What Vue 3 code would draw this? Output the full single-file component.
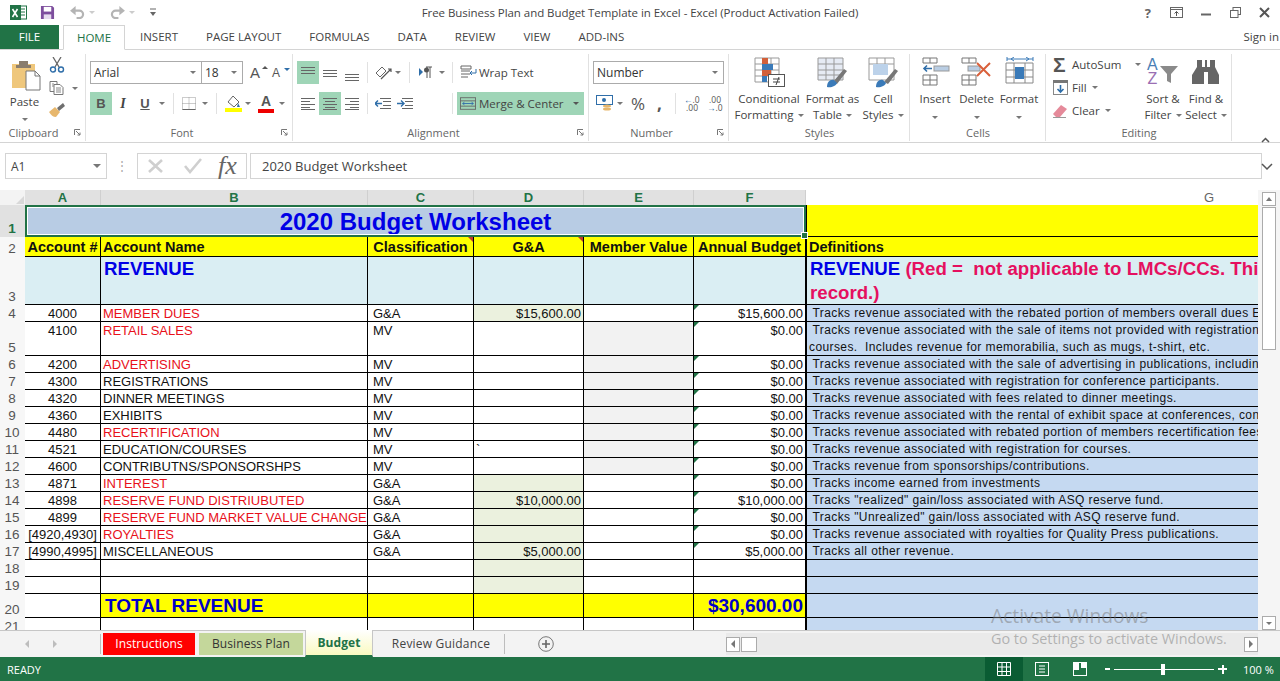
<template>
  <div class="app">
    <div class="titlebar">
      <div class="qat">
        <svg width="17" height="17" viewBox="0 0 17 17"><rect x="8" y="2" width="8.500" height="13" fill="#fff" stroke="#217346"/><path d="M11 5h4M11 8h4M11 11h4" stroke="#217346"/><rect x="0" y="1" width="11" height="15" fill="#217346"/><path d="M2.500 5l5 8M7.500 5l-5 8" stroke="#fff" stroke-width="1.600"/></svg>
        <svg class="save" width="15" height="15" viewBox="0 0 16 16"><path d="M1 1h12l2 2v12H1z" fill="#7d4e9d"/><rect x="4" y="2" width="8" height="5" fill="#fff"/><rect x="4" y="10" width="8" height="5" fill="#e6dcee"/></svg>
        <svg class="undo" width="15" height="13" viewBox="0 0 16 14"><path d="M4 5h6a4 4 0 0 1 0 8H7" fill="none" stroke="#b4b4b4" stroke-width="2.400"/><path d="M6 0v10L0 5z" fill="#b4b4b4"/></svg>
        <i class="dd light"></i>
        <svg class="redo" width="15" height="13" viewBox="0 0 16 14"><path d="M12 5H6a4 4 0 0 0 0 8h3" fill="none" stroke="#b4b4b4" stroke-width="2.400"/><path d="M10 0v10l6-5z" fill="#b4b4b4"/></svg>
        <i class="dd light"></i>
        <svg class="custom" width="8" height="9" viewBox="0 0 8 9"><path d="M1 1h6" stroke="#666"/><path d="M1 4h6L4 8z" fill="#666"/></svg>
      </div>
      <div class="doc-title">Free Business Plan and Budget Template in Excel - Excel (Product Activation Failed)</div>
      <div class="win">
        <span class="help">?</span>
        <svg width="13" height="11" viewBox="0 0 13 11"><rect x=".5" y=".5" width="12" height="10" fill="none" stroke="#666"/><path d="M.5 2.500h12" stroke="#666"/><path d="M6.500 9V4.500M4.500 6.500l2-2 2 2" fill="none" stroke="#555"/></svg>
        <svg width="10" height="10" viewBox="0 0 10 10"><path d="M0 6.500h10" stroke="#666" stroke-width="2"/></svg>
        <svg width="11" height="11" viewBox="0 0 11 11"><rect x="3" y=".5" width="7.500" height="7" fill="none" stroke="#666"/><rect x=".5" y="3.500" width="7.500" height="7" fill="#fff" stroke="#666"/></svg>
        <svg width="11" height="11" viewBox="0 0 11 11"><path d="M1 1l9 9M10 1l-9 9" stroke="#555" stroke-width="2"/></svg>
      </div>
    </div>

    <div class="tabs">
      <div class="file">FILE</div>
      <div class="tab home">HOME</div>
      <div class="tab-list">
        <span v-for="t in tabs" :key="t">{{ t }}</span>
      </div>
      <div class="signin">Sign in</div>
    </div>

    <div class="ribbon">
      <div class="group g-clip">
        <div class="body clip">
          <div class="paste">
            <svg width="31" height="32" viewBox="0 0 31 32"><rect x="1" y="5" width="23" height="24" fill="#efc77c"/><rect x="8" y="2" width="9" height="6" fill="#8a7d6d"/><rect x="5" y="6" width="15" height="3" fill="#8a7d6d"/><path d="M15 12h9l5 5v14H15z" fill="#fff" stroke="#777"/><path d="M24 12v5h5" fill="none" stroke="#777"/></svg>
            <span>Paste</span>
            <i class="dd"></i>
          </div>
          <div class="clip-small">
            <svg width="16" height="16" viewBox="0 0 16 16"><path d="M4 0l6 10M12 0L6 10" stroke="#666" stroke-width="1.300"/><circle cx="4" cy="12.500" r="2.500" fill="none" stroke="#2f6ea9" stroke-width="1.400"/><circle cx="12" cy="12.500" r="2.500" fill="none" stroke="#2f6ea9" stroke-width="1.400"/></svg>
            <div class="copy"><svg width="16" height="14" viewBox="0 0 16 14"><path d="M1 .5h7v10H1z" fill="#fff" stroke="#777"/><path d="M5 3.500h6l3 3v7H5z" fill="#fff" stroke="#777"/><path d="M7 7h5M7 9h5M7 11h5M3 3h2M3 5h2" stroke="#888"/></svg><i class="dd"></i></div>
            <svg width="16" height="14" viewBox="0 0 16 14"><path d="M0 9l6-5 5 5-4 5c-3 0-5-2-7-5z" fill="#e7b76d"/><path d="M8 5l6-5 2 3-6 5z" fill="#6f6f6f"/></svg>
          </div>
        </div>
        <div class="label launcher">Clipboard<svg class="launch" width="7" height="7" viewBox="0 0 7 7"><path d="M.5 6V.5H6M2 2l4 4M6 3.500V6H3.500" fill="none" stroke="#777"/></svg></div>
      </div>

      <div class="group g-font">
        <div class="body">
          <div class="row">
            <div class="combo font-name">Arial<i class="dd"></i></div>
            <div class="combo font-size">18<i class="dd"></i></div>
            <span class="grow-a">A<i class="up"></i></span>
            <span class="grow-a small">A<i class="down"></i></span>
          </div>
          <div class="row">
            <div class="ib on bold">B</div>
            <div class="ib ital">I</div>
            <div class="ib under">U</div>
            <i class="dd u-dd"></i>
            <b class="sep s1"></b>
            <svg class="bd" width="14" height="13" viewBox="0 0 14 13"><path d="M.5.5h13v12H.5zM7 .5v12M.5 6.500h13" fill="none" stroke="#999" stroke-dasharray="1 1"/><path d="M.5 12.500h13" stroke="#666"/></svg>
            <i class="dd bd-dd"></i>
            <b class="sep s2"></b>
            <svg class="fill" width="17" height="19" viewBox="0 0 17 19"><path d="M3 8l5-6 6 6-5 5z" fill="#fff" stroke="#666"/><path d="M13 9l2 4h-3z" fill="#2f6ea9"/><rect x="0" y="14" width="17" height="4" fill="#ff0"/></svg>
            <i class="dd fill-dd"></i>
            <span class="color-a">A</span>
            <i class="dd col-dd"></i>
          </div>
        </div>
        <div class="label launcher">Font<svg class="launch" width="7" height="7" viewBox="0 0 7 7"><path d="M.5 6V.5H6M2 2l4 4M6 3.500V6H3.500" fill="none" stroke="#777"/></svg></div>
      </div>

      <div class="group g-align">
        <div class="body">
          <div class="row">
            <div class="ib on"><svg width="14" height="16" viewBox="0 0 14 16"><path d="M0 2.500h14M0 5.500h14M0 8.500h14" stroke="#666"/></svg></div>
            <div class="ib"><svg width="14" height="16" viewBox="0 0 14 16"><path d="M0 5.500h14M0 8.500h14M0 11.500h14" stroke="#666"/></svg></div>
            <div class="ib"><svg width="14" height="16" viewBox="0 0 14 16"><path d="M0 9.500h14M0 12.500h14M0 15.500h14" stroke="#666"/></svg></div>
            <b class="sep s3"></b>
            <svg class="orient" width="18" height="16" viewBox="0 0 18 16"><path d="M1 8l6-6 4 4-6 6z" fill="none" stroke="#666"/><path d="M6 14L16 4M13 4h3v3" fill="none" stroke="#555" stroke-width="1.200"/></svg>
            <i class="dd or-dd"></i>
            <b class="sep s4"></b>
            <svg class="para" width="14" height="13" viewBox="0 0 14 13"><path d="M0 2v8l4-4z" fill="#2f6ea9"/><path d="M7 1h6M8 1v11M11 1v11" stroke="#555"/><circle cx="7.500" cy="4" r="2.500" fill="#555"/></svg>
            <i class="dd"></i>
            <b class="sep s5"></b>
            <svg class="wrap-ic" width="17" height="15" viewBox="0 0 17 15"><path d="M1 1h10v3H1zM1 6h9M1 9h9M1 12h7" fill="none" stroke="#666"/><path d="M16 4v4h-6M12 6l-2 2 2 2" fill="none" stroke="#2f6ea9"/></svg>
            <span class="wrap-txt">Wrap Text</span>
          </div>
          <div class="row">
            <div class="ib"><svg width="14" height="12" viewBox="0 0 14 12"><path d="M0 .5h14M0 3.500h9M0 6.500h14M0 9.500h9M0 11.500h14" stroke="#666"/></svg></div>
            <div class="ib on"><svg width="14" height="12" viewBox="0 0 14 12"><path d="M0 .5h14M2 3.500h10M0 6.500h14M2 9.500h10M0 11.500h14" stroke="#666"/></svg></div>
            <div class="ib"><svg width="14" height="12" viewBox="0 0 14 12"><path d="M0 .5h14M5 3.500h9M0 6.500h14M5 9.500h9M0 11.500h14" stroke="#666"/></svg></div>
            <b class="sep s3"></b>
            <svg class="outdent" width="16" height="12" viewBox="0 0 16 12"><path d="M5 .5h11M8 3.500h8M8 7.500h8M5 10.500h11" stroke="#666"/><path d="M0 5.500h7M3 2.500l-3 3 3 3" fill="none" stroke="#2f6ea9" stroke-width="1.400"/></svg>
            <svg class="indent" width="16" height="12" viewBox="0 0 16 12"><path d="M5 .5h11M8 3.500h8M8 7.500h8M5 10.500h11" stroke="#666"/><path d="M0 5.500h7M4 2.500l3 3-3 3" fill="none" stroke="#2f6ea9" stroke-width="1.400"/></svg>
            <b class="sep s6"></b>
            <div class="merge">
              <svg width="16" height="15" viewBox="0 0 18 16"><rect x=".5" y="1.500" width="17" height="13" fill="none" stroke="#666"/><path d="M.5 5h17M.5 11h17" stroke="#666"/><path d="M3 8h12M5 6.500L3 8l2 1.500M13 6.500L15 8l-2 1.500" fill="none" stroke="#2f6ea9"/></svg>
              <span>Merge &amp; Center</span>
              <i class="dd dark"></i>
            </div>
          </div>
        </div>
        <div class="label launcher">Alignment<svg class="launch" width="7" height="7" viewBox="0 0 7 7"><path d="M.5 6V.5H6M2 2l4 4M6 3.500V6H3.500" fill="none" stroke="#777"/></svg></div>
      </div>

      <div class="group g-num">
        <div class="body">
          <div class="row">
            <div class="combo num-format">Number<i class="dd"></i></div>
          </div>
          <div class="row">
            <svg class="acct" width="17" height="17" viewBox="0 0 17 17"><rect x=".5" y=".5" width="16" height="9" fill="#fff" stroke="#2f6ea9"/><circle cx="8" cy="5" r="2" fill="#2f6ea9"/><ellipse cx="11" cy="11" rx="4" ry="1.500" fill="#e7b76d"/><ellipse cx="11" cy="14" rx="4" ry="1.500" fill="#e7b76d"/></svg>
            <i class="dd"></i>
            <span class="pct">%</span>
            <span class="comma">,</span>
            <b class="sep s7"></b>
            <div class="dec"><span class="arr">←</span>.0<br />.00</div>
            <div class="dec second">.00<br /><span class="arr">→</span>.0</div>
          </div>
        </div>
        <div class="label launcher">Number<svg class="launch" width="7" height="7" viewBox="0 0 7 7"><path d="M.5 6V.5H6M2 2l4 4M6 3.500V6H3.500" fill="none" stroke="#777"/></svg></div>
      </div>

      <div class="group g-styles">
        <div class="body large">
          <div class="big w-cond">
            <svg width="31" height="31" viewBox="0 0 31 31"><path d="M1 1h24v24H1zM9 1v24M17 1v24M1 7h24M1 13h24M1 19h24" fill="none" stroke="#999"/><rect x="8" y="1" width="6" height="6" fill="#d2603a"/><rect x="8" y="7" width="11" height="6" fill="#3a7ab8"/><rect x="8" y="13" width="9" height="6" fill="#d2603a"/><rect x="8" y="19" width="5" height="6" fill="#3a7ab8"/><rect x="14.500" y="17.500" width="16" height="12" fill="#fff" stroke="#555"/><path d="M19 22h7M19 25h7M25 20l-3 8" stroke="#444"/></svg>
            <span>Conditional<br />Formatting<i class="dd"></i></span>
          </div>
          <div class="big w-table">
            <svg width="31" height="31" viewBox="0 0 31 31"><path d="M1 1h25v22H1zM9 1v22M17 1v22M1 7h25M1 13h25M1 18h25" fill="#e6ebf4" stroke="#999"/><path d="M16 25l11-13 3 2-10 13z" fill="#777"/><path d="M10 30c0-5 3-8 7-7l3 3c-1 3-6 5-10 4z" fill="#3a7ab8"/></svg>
            <span>Format as<br />Table<i class="dd"></i></span>
          </div>
          <div class="big w-cell">
            <svg width="31" height="31" viewBox="0 0 31 31"><path d="M1 1h25v22H1zM9 1v6M17 1v6M1 7h25" fill="#fff" stroke="#999"/><rect x="5" y="7" width="15" height="11" fill="#bcd2ea"/><path d="M16 25l11-13 3 2-10 13z" fill="#777"/><path d="M8 30c0-5 3-8 7-7l3 3c-1 3-6 5-10 4z" fill="#3a7ab8"/></svg>
            <span>Cell<br />Styles<i class="dd"></i></span>
          </div>
        </div>
        <div class="label">Styles</div>
      </div>

      <div class="group g-cells">
        <div class="body large">
          <div class="big w-ins">
            <svg width="31" height="31" viewBox="0 0 31 31"><path d="M3 1h14v5H3zM10 1v5M3 18h14v10H3zM10 18v10M3 23h14" fill="none" stroke="#777"/><rect x="14" y="9" width="15" height="5" fill="#b9cde3" stroke="#999"/><path d="M4 11.500h8M7 8.500l-3 3 3 3" fill="none" stroke="#2f6ea9" stroke-width="1.600"/></svg>
            <span>Insert</span><i class="dd"></i>
          </div>
          <div class="big w-del">
            <svg width="33" height="31" viewBox="0 0 33 31"><path d="M2 1h14v5H2zM9 1v5M2 18h14v10H2zM9 18v10M2 23h14" fill="none" stroke="#777"/><rect x="8" y="9" width="12" height="5" fill="#b9cde3" stroke="#999"/><path d="M17 6l13 13M30 6L17 19" stroke="#d9603b" stroke-width="2"/></svg>
            <span>Delete</span><i class="dd"></i>
          </div>
          <div class="big w-fmt">
            <svg width="31" height="31" viewBox="0 0 31 31"><path d="M3 2h26M3 0v4M29 0v4M7 2l3-2M7 2l3 2M25 2l-3-2M25 2l-3 2" fill="none" stroke="#3a7ab8"/><path d="M2 6h27v20H2zM10 6v20M21 6v20M2 13h27M2 20h27" fill="none" stroke="#888"/><rect x="11" y="10" width="9" height="12" fill="#3a7ab8"/></svg>
            <span>Format</span><i class="dd"></i>
          </div>
        </div>
        <div class="label">Cells</div>
      </div>

      <div class="group g-edit">
        <div class="body large">
          <div class="edit-small">
            <div class="e-row"><span class="sigma">Σ</span><span>AutoSum</span><i class="dd autosum-dd"></i></div>
            <div class="e-row"><svg width="15" height="15" viewBox="0 0 15 15"><rect x=".5" y=".5" width="14" height="14" fill="#fff" stroke="#888"/><rect x="0" y="0" width="15" height="3" fill="#777"/><path d="M7.500 5v7M4.500 9l3 3 3-3" fill="none" stroke="#2f6ea9" stroke-width="1.600"/></svg><span>Fill</span><i class="dd"></i></div>
            <div class="e-row"><svg width="15" height="14" viewBox="0 0 15 14"><path d="M0 10l8-9 6 4-7 8H3z" fill="#e58a9a"/><path d="M0 13.500h13" stroke="#999"/></svg><span>Clear</span><i class="dd"></i></div>
          </div>
          <div class="big w-sort">
            <svg width="32" height="31" viewBox="0 0 32 31"><path d="M13 9h18l-7 8v9l-4-2v-7z" fill="#8a8a8a"/></svg>
            <span class="az"><em class="a">A</em><em class="z">Z</em></span>
            <span>Sort &amp;<br />Filter<i class="dd"></i></span>
          </div>
          <div class="big w-find">
            <svg width="28" height="31" viewBox="0 0 28 31"><path d="M5 3h5v7h3V3h2v7h3V3h5v7l4 8v9H16V15h-4v12H0V18l5-8z" fill="#666"/></svg>
            <span>Find &amp;<br />Select<i class="dd"></i></span>
          </div>
        </div>
        <div class="label">Editing</div>
      </div>

      <div class="collapse">
        <svg width="9" height="6" viewBox="0 0 9 6"><path d="M1 5l3.500-3.500L8 5" fill="none" stroke="#555" stroke-width="1.500"/></svg>
      </div>
    </div>

    <div class="formula">
      <div class="namebox">A1<i class="dd"></i></div>
      <div class="dots">⋮</div>
      <div class="fx-box">
        <svg width="18" height="14" viewBox="0 0 18 14"><path d="M2 1l13 12M15 1L2 13" stroke="#cfcfcf" stroke-width="2.600"/></svg>
        <svg width="20" height="16" viewBox="0 0 20 16"><path d="M2 8l5 6L18 1" fill="none" stroke="#cfcfcf" stroke-width="2.600"/></svg>
        <span class="fx">fx</span>
      </div>
      <div class="f-input">2020 Budget Worksheet</div>
      <svg class="f-more" width="14" height="8" viewBox="0 0 14 8"><path d="M2 1l5 5 5-5" fill="none" stroke="#555" stroke-width="1.500"/></svg>
    </div>

    <div class="sheet">
      <div class="grid" :style="{ gridTemplateRows: rowTracks }">
        <div class="corner"><i></i></div>
        <div v-for="c in colHeads" :key="c" class="ch" :class="{ sel: c !== 'G' }">{{ c }}</div>

        <template v-for="r in rows" :key="r.n">
          <div class="rh" :class="{ sel: r.n === 1 }">{{ r.n }}</div>

          <template v-if="r.n === 1">
            <div class="title-cell">2020 Budget Worksheet<i class="handle"></i></div>
            <div class="cell g yellow"></div>
          </template>

          <template v-else-if="r.n === 2">
            <div v-for="(t, i) in heads" :key="i" class="cell head" :class="{ ctr: i !== 1 && i !== 6, note: i === 2 || i === 3, g: i === 6 }">{{ t }}</div>
          </template>

          <template v-else-if="r.n === 3">
            <div class="cell band"></div>
            <div class="cell band rev">REVENUE</div>
            <div class="cell band"></div>
            <div class="cell band"></div>
            <div class="cell band"></div>
            <div class="cell band"></div>
            <div class="cell g band rev-note"><span class="rev-blue">REVENUE</span>{{ revNote }}</div>
          </template>

          <template v-else-if="r.n === 20">
            <div class="cell"></div>
            <div class="cell yellow total">TOTAL REVENUE</div>
            <div class="cell yellow"></div>
            <div class="cell yellow"></div>
            <div class="cell yellow"></div>
            <div class="cell yellow total num">$30,600.00</div>
            <div class="cell g blue"></div>
          </template>

          <template v-else>
            <div class="cell ctr">{{ r.a }}</div>
            <div class="cell" :class="{ red: r.red }">{{ r.b }}</div>
            <div class="cell cls">{{ r.c }}</div>
            <div class="cell" :class="{ num: r.d !== '`', sage: r.sage }">{{ r.d }}</div>
            <div class="cell" :class="{ grey: r.grey }"></div>
            <div class="cell num" :class="{ mark: r.f }">{{ r.f }}</div>
            <div class="cell g blue desc">{{ r.g }}</div>
          </template>
        </template>
      </div>

      <div class="vscroll">
        <div class="sb-btn"><i class="tri-up"></i></div>
        <div class="thumb"></div>
        <div class="sb-btn"><i class="dd"></i></div>
      </div>
      <div class="watermark">
        <div class="wm-big">Activate Windows</div>
        <div class="wm-small">Go to Settings to activate Windows.</div>
      </div>
    </div>

    <div class="tabbar">
      <div class="nav"><i class="tri-left"></i><i class="tri-right"></i></div>
      <b class="tab-sep"></b>
      <div class="stab instr">Instructions</div>
      <div class="stab plan">Business Plan</div>
      <div class="stab budget">Budget</div>
      <div class="stab review">Review Guidance</div>
      <b class="tab-sep"></b>
      <svg class="plus" width="16" height="16" viewBox="0 0 16 16"><circle cx="8" cy="8" r="7.300" fill="none" stroke="#777"/><path d="M8 4v8M4 8h8" stroke="#666" stroke-width="1.600"/></svg>
      <div class="hscroll">
        <div class="sb-btn h"><i class="tri-left"></i></div>
        <div class="hthumb"></div>
        <div class="h-track"></div>
        <div class="sb-btn h"><i class="tri-right"></i></div>
      </div>
    </div>

    <div class="status">
      <span class="ready">READY</span>
      <div class="views">
        <div class="view active"><svg width="14" height="14" viewBox="0 0 14 14"><path d="M.5.5h13v13H.5zM5 .5v13M9.500.5v13M.5 5h13M.5 9.500h13" fill="none" stroke="#fff"/></svg></div>
        <div class="view"><svg width="14" height="14" viewBox="0 0 14 14"><rect x=".5" y=".5" width="13" height="13" fill="none" stroke="#fff"/><path d="M4 4h6M4 7h6M4 10h6" stroke="#fff"/></svg></div>
        <div class="view"><svg width="14" height="14" viewBox="0 0 14 14"><rect x=".5" y=".5" width="13" height="13" fill="none" stroke="#fff"/><path d="M1 1h5v7H1zM8 1h5v5H8z" fill="#fff"/></svg></div>
      </div>
      <div class="zoom">
        <span class="z-m"></span>
        <div class="slider"><span class="knob"></span></div>
        <span class="z-p"></span>
        <span class="pct-txt">100 %</span>
      </div>
    </div>
  </div>
</template>

<script setup>
const tabs = ['INSERT', 'PAGE LAYOUT', 'FORMULAS', 'DATA', 'REVIEW', 'VIEW', 'ADD-INS']
const colHeads = ['A', 'B', 'C', 'D', 'E', 'F', 'G']
const heads = ['Account #', 'Account Name', 'Classification', 'G&A', 'Member Value', 'Annual Budget', 'Definitions']
const revNote = ' (Red =  not applicable to LMCs/CCs. This section is a\nrecord.)'

const rows = [
  { n: 1, h: 32 },
  { n: 2, h: 20 },
  { n: 3, h: 48 },
  { n: 4, h: 17, a: '4000', b: 'MEMBER DUES', red: true, c: 'G&A', d: '$15,600.00', sage: true, f: '$15,600.00', g: ' Tracks revenue associated with the rebated portion of members overall dues Expense' },
  { n: 5, h: 34, a: '4100', b: 'RETAIL SALES', red: true, c: 'MV', grey: true, f: '$0.00', g: ' Tracks revenue associated with the sale of items not provided with registration fees or\ncourses.  Includes revenue for memorabilia, such as mugs, t-shirt, etc.' },
  { n: 6, h: 17, a: '4200', b: 'ADVERTISING', red: true, c: 'MV', grey: true, f: '$0.00', g: ' Tracks revenue associated with the sale of advertising in publications, including newsletters' },
  { n: 7, h: 17, a: '4300', b: 'REGISTRATIONS', c: 'MV', grey: true, f: '$0.00', g: ' Tracks revenue associated with registration for conference participants.' },
  { n: 8, h: 17, a: '4320', b: 'DINNER MEETINGS', c: 'MV', grey: true, f: '$0.00', g: ' Tracks revenue associated with fees related to dinner meetings.' },
  { n: 9, h: 17, a: '4360', b: 'EXHIBITS', c: 'MV', grey: true, f: '$0.00', g: ' Tracks revenue associated with the rental of exhibit space at conferences, conventions' },
  { n: 10, h: 17, a: '4480', b: 'RECERTIFICATION', red: true, c: 'MV', grey: true, f: '$0.00', g: ' Tracks revenue associated with rebated portion of members recertification fees' },
  { n: 11, h: 17, a: '4521', b: 'EDUCATION/COURSES', c: 'MV', d: '`', grey: true, f: '$0.00', g: ' Tracks revenue associated with registration for courses.' },
  { n: 12, h: 17, a: '4600', b: 'CONTRIBUTNS/SPONSORSHPS', c: 'MV', grey: true, f: '$0.00', g: ' Tracks revenue from sponsorships/contributions.' },
  { n: 13, h: 17, a: '4871', b: 'INTEREST', red: true, c: 'G&A', sage: true, f: '$0.00', g: ' Tracks income earned from investments' },
  { n: 14, h: 17, a: '4898', b: 'RESERVE FUND DISTRIUBUTED', red: true, c: 'G&A', d: '$10,000.00', sage: true, f: '$10,000.00', g: ' Tracks "realized" gain/loss associated with ASQ reserve fund.' },
  { n: 15, h: 17, a: '4899', b: 'RESERVE FUND MARKET VALUE CHANGE', red: true, c: 'G&A', sage: true, f: '$0.00', g: ' Tracks "Unrealized" gain/loss associated with ASQ reserve fund.' },
  { n: 16, h: 17, a: '[4920,4930]', b: 'ROYALTIES', red: true, c: 'G&A', sage: true, f: '$0.00', g: ' Tracks revenue associated with royalties for Quality Press publications.' },
  { n: 17, h: 17, a: '[4990,4995]', b: 'MISCELLANEOUS', c: 'G&A', d: '$5,000.00', sage: true, f: '$5,000.00', g: ' Tracks all other revenue.' },
  { n: 18, h: 17, sage: true },
  { n: 19, h: 17, sage: true },
  { n: 20, h: 24 },
  { n: 21, h: 17 }
]

const rowTracks = '15px ' + rows.map((r) => r.h + 'px').join(' ')
</script>

<style>
html, body { margin: 0; background: #fff; overflow: hidden; }
</style>

<style scoped>
.app {
  width: 1280px;
  height: 681px;
  display: flex;
  flex-direction: column;
  overflow: hidden;
  font-family: "Open Sans", "Liberation Sans", sans-serif;
  font-size: 11.5px;
  color: #444;
  background: #fff;
}
i { font-style: normal; }
svg { flex-shrink: 0; }

.dd {
  display: inline-block;
  width: 0;
  height: 0;
  border-left: 3px solid transparent;
  border-right: 3px solid transparent;
  border-top: 3px solid #777;
  vertical-align: middle;
  margin-left: 4px;
}
.dd.light { border-top-color: #ccc; }
.dd.dark { border-top-color: #555; }

/* title bar */
.titlebar {
  height: 25px;
  display: grid;
  grid-template-columns: 1fr auto 1fr;
  align-items: center;
}
.qat { display: flex; align-items: center; padding-left: 10px; }
.save { margin-left: 13px; }
.undo { margin-left: 15px; }
.redo { margin-left: 15px; }
.custom { margin-left: 14px; }
.doc-title { font-size: 11.5px; color: #444; letter-spacing: -.05px; }
.win { display: flex; align-items: center; justify-content: flex-end; gap: 18.500px; padding-right: 10px; }
.help { font-weight: 700; font-size: 13px; color: #666; }

/* tabs */
.tabs {
  height: 25px;
  display: flex;
  align-items: stretch;
  border-bottom: 1px solid #d4d4d4;
  box-sizing: border-box;
  line-height: 24px;
}
.file {
  width: 59px;
  background: #217346;
  color: #fff;
  text-align: center;
}
.tab.home {
  margin-left: 4px;
  width: 62px;
  box-sizing: border-box;
  border: 1px solid #d4d4d4;
  border-bottom: 1px solid #fff;
  height: 25px;
  background: #fff;
  color: #217346;
  text-align: center;
}
.tab-list { display: flex; gap: 28px; margin-left: 15px; }
.signin { margin-left: auto; padding-right: 1px; }

/* ribbon */
.ribbon {
  height: 93px;
  box-sizing: border-box;
  border-bottom: 1px solid #d4d4d4;
  display: flex;
  position: relative;
}
.group {
  box-sizing: border-box;
  height: 87px;
  margin-top: 4px;
  border-right: 1px solid #e1e1e1;
  display: flex;
  flex-direction: column;
  padding-left: 4px;
}
.g-clip { width: 86px; padding-left: 0; }
.g-font { width: 207px; }
.g-align { width: 296px; }
.g-num { width: 140px; }
.g-styles { width: 181px; }
.g-cells { width: 136px; }
.g-edit { width: 186px; }
.body {
  height: 70px;
  box-sizing: border-box;
  padding-top: 7px;
  display: flex;
  flex-direction: column;
  gap: 8px;
}
.body.clip, .body.large { flex-direction: row; gap: 0; padding-top: 3px; }
.label {
  position: relative;
  height: 16px;
  line-height: 16px;
  text-align: center;
  color: #666;
  font-size: 11px;
  margin-top: 2px;
  padding-right: 3px;
}
.label.launcher { padding-right: 18px; }
.launch { position: absolute; right: 4px; top: 4px; }
.row { display: flex; align-items: center; height: 23px; }
.ib {
  width: 22px;
  height: 23px;
  display: flex;
  align-items: center;
  justify-content: center;
  font-size: 13px;
}
.ib.on { background: #9fd5b7; }
.bold { font-family: "Liberation Sans", sans-serif; font-weight: 700; color: #555; }
.ital { font-family: "Liberation Serif", serif; font-style: italic; font-weight: 700; font-size: 14px; }
.under { text-decoration: underline; font-family: "Liberation Sans", sans-serif; font-weight: 700; color: #555; }
.sep { display: block; width: 1px; height: 21px; background: #e1e1e1; }
.s1 { margin: 0 8px 0 8px; }
.s2 { margin: 0 8px 0 8px; }
.s3 { margin: 0 7px 0 4px; }
.s4 { margin: 0 9px 0 8px; }
.s5 { margin: 0 7px 0 7px; }
.s6 { margin: 0 4px 0 39px; }
.s7 { margin: 0 8px 0 13px; }
.u-dd { margin-left: 3px; }
.bd-dd { margin-left: 6px; }
.fill-dd { margin-left: 3px; }
.col-dd { margin-left: 5px; }
.or-dd { margin-left: 2px; }

/* clipboard */
.paste { width: 49px; display: flex; flex-direction: column; align-items: center; }
.paste svg { margin: 2px 0 0 4px; }
.paste span { margin-top: 3px; }
.paste .dd { margin: 9px 0 0; }
.clip-small { display: flex; flex-direction: column; align-items: flex-start; gap: 8px; }
.copy { display: flex; align-items: center; }
.copy .dd { margin-left: 7px; }

/* font */
.combo {
  box-sizing: border-box;
  height: 23px;
  border: 1px solid #ababab;
  display: flex;
  align-items: center;
  justify-content: space-between;
  padding: 0 5px 0 3px;
  font-size: 12px;
  color: #333;
}
.font-name { width: 112px; }
.font-size { width: 42px; margin-left: -1px; }
.grow-a, .color-a { font-family: "Liberation Sans", sans-serif; font-size: 15px; color: #555; position: relative; }
.grow-a { margin-left: 7px; width: 15px; }
.grow-a.small { font-size: 12px; margin-left: 7px; }
.up, .down { position: absolute; right: -3px; top: 2px; width: 0; height: 0; border-left: 3px solid transparent; border-right: 3px solid transparent; }
.up { border-bottom: 3px solid #555; }
.down { border-top: 3px solid #2f6ea9; }
.color-a {
  margin-left: 7px;
  width: 16px;
  text-align: center;
  border-bottom: 4px solid #e00;
  line-height: 15px;
  font-weight: 700;
  font-size: 14px;
}
.para + .dd { margin-left: 6px; }
.wrap-ic { margin-right: 2px; }
.indent { margin-left: 6px; }
.merge {
  width: 127px;
  height: 23px;
  background: #9fd5b7;
  display: flex;
  align-items: center;
  padding-left: 3px;
  box-sizing: border-box;
  gap: 3px;
  white-space: nowrap;
}
.merge .dd { margin-left: auto; margin-right: 5px; }

/* number */
.num-format { width: 131px; }
.acct { margin-left: 3px; }
.pct { font-size: 17px; margin-left: 8px; width: 20px; color: #555; }
.comma { font-size: 17px; font-weight: 700; margin-left: 6px; width: 5px; line-height: 14px; color: #555; }
.dec { font-size: 8.500px; line-height: 8px; width: 14px; text-align: right; white-space: nowrap; color: #555; }
.dec.second { margin-left: 9px; }
.arr { color: #2f6ea9; }

/* big buttons */
.big { display: flex; flex-direction: column; align-items: center; text-align: center; line-height: 16px; white-space: nowrap; }
.big > span { margin-top: 3px; }
.big > .dd { margin: 9px 0 0; }
.big > span .dd { margin-left: 4px; }
.w-cond { width: 70px; margin-left: 1px; }
.w-table { width: 57px; }
.w-cell { width: 44px; }
.w-ins { width: 40px; margin-left: 1px; }
.w-del { width: 43px; }
.w-fmt { width: 42px; }
.edit-small { width: 93px; box-sizing: border-box; display: flex; flex-direction: column; padding-left: 3px; margin-top: -4px; }
.e-row { display: flex; align-items: center; height: 23px; gap: 4px; }
.e-row .dd { margin-left: 1px; }
.e-row .autosum-dd { margin-left: 10px; }
.sigma { font-size: 21px; font-family: "Liberation Sans", sans-serif; font-weight: 700; width: 15px; color: #555; line-height: 20px; }
.w-sort { width: 40px; position: relative; }
.w-find { width: 40px; margin-left: 3px; }
.az { position: absolute; left: 4px; top: 1px; margin: 0 !important; display: flex; flex-direction: column; font-family: "Liberation Sans", sans-serif; font-size: 16px; line-height: 14px; }
.az em { font-style: normal; }
.a { color: #4a7eb5; }
.z { color: #9b6fb3; }
.collapse { margin: 81px 0 0 29px; }

/* formula bar */
.formula {
  height: 47px;
  box-sizing: border-box;
  padding: 10px 0 0 5px;
  display: flex;
  align-items: flex-start;
}
.namebox {
  box-sizing: border-box;
  width: 102px;
  height: 26px;
  border: 1px solid #d4d4d4;
  display: flex;
  align-items: center;
  justify-content: space-between;
  padding: 0 5px;
  font-size: 12px;
}
.namebox .dd { border-left-width: 4px; border-right-width: 4px; border-top-width: 4px; }
.dots { width: 30px; text-align: center; line-height: 26px; color: #aaa; }
.fx-box {
  box-sizing: border-box;
  width: 110px;
  height: 26px;
  border: 1px solid #d4d4d4;
  display: flex;
  align-items: center;
  padding-left: 9px;
  gap: 18px;
}
.fx { font-family: "Liberation Serif", serif; font-style: italic; font-size: 26px; color: #666; margin-left: -3px; line-height: 22px; }
.f-input {
  box-sizing: border-box;
  width: 1012px;
  height: 26px;
  margin-left: 3px;
  border: 1px solid #d4d4d4;
  line-height: 24px;
  padding-left: 11px;
  font-size: 13px;
  color: #444;
}
.f-more { margin: 10px 0 0 -2px; }

/* sheet */
.sheet { height: 440px; display: flex; position: relative; }
.grid {
  width: 1258px;
  height: 440px;
  overflow: hidden;
  display: grid;
  grid-template-columns: 25px 76px 267px 106px 110px 110px 112px 452px;
  font-family: "Liberation Sans", sans-serif;
  font-size: 13px;
  color: #111;
}
.corner { background: #f3f3f3; position: relative; }
.corner i { position: absolute; right: 1px; bottom: 1px; border-left: 8px solid transparent; border-bottom: 8px solid #d8d8d8; }
.ch {
  box-sizing: border-box;
  background: #f3f3f3;
  color: #666;
  text-align: center;
  line-height: 15px;
  font-size: 13px;
  border-right: 1px solid #cfcfcf;
}
.ch.sel { background: #e1e1e1; color: #217346; font-weight: 700; }
.ch:nth-child(8) { border-right: 0; background: #fff; text-align: left; padding-left: 398px; }
.rh {
  box-sizing: border-box;
  display: flex;
  align-items: flex-end;
  justify-content: center;
  background: #f7f7f7;
  color: #555;
  font-size: 13.500px;
  line-height: 16px;
  padding-right: 1px;
}
.rh.sel { background: #e1e1e1; color: #217346; font-weight: 700; }
.cell {
  box-sizing: border-box;
  border-right: 1px solid #000;
  border-bottom: 1px solid #000;
  padding: 0 2px;
  line-height: 18px;
  white-space: nowrap;
  overflow: hidden;
  position: relative;
  min-width: 0;
}
.cell.cls { padding-left: 5px; }
.title-cell {
  grid-column: span 6;
  box-sizing: border-box;
  border: 2px solid #217346;
  outline: 1px solid #fff;
  outline-offset: -3px;
  background: #b8cce4;
  color: #0000e6;
  font-size: 24px;
  font-weight: 700;
  text-align: center;
  line-height: 30px;
  position: relative;
  z-index: 2;
}
.handle { position: absolute; right: -4px; bottom: -4px; width: 5px; height: 5px; background: #217346; border: 1px solid #fff; }
.ctr { text-align: center; }
.num { text-align: right; }
.red { color: #e8101a; }
.yellow { background: #ff0; }
.grey { background: #f2f2f2; }
.sage { background: #ebf1de; }
.blue { background: #c5d9f1; }
.band { background: #daeef3; }
.head { background: #ff0; font-weight: 700; font-size: 14.500px; line-height: 21px; }
.head.note::after { content: ""; position: absolute; right: 0; top: 0; border-left: 5px solid transparent; border-top: 5px solid #c0392b; }
.rev { color: #0000e6; font-weight: 700; font-size: 18.670px; line-height: 24px; padding-left: 3px; }
.g { border-right: 0; border-left: 2px solid #000; margin-left: -1px; }
.rev-note { color: #e5105f; font-weight: 700; font-size: 18.670px; line-height: 24px; padding-left: 3px; white-space: pre; }
.rev-blue { color: #0000e6; }
.total { color: #0000c8; font-weight: 700; font-size: 19px; line-height: 23px; padding-left: 4px; }
.total.num { padding: 0 2px 0 0; }
.mark::before { content: ""; position: absolute; left: 0; top: 0; border-right: 5px solid transparent; border-top: 5px solid #217346; }
.desc { font-size: 12px; letter-spacing: .4px; white-space: pre; line-height: 17px; color: #111; }

/* scrollbars */
.vscroll {
  width: 22px;
  display: flex;
  flex-direction: column;
  align-items: center;
  padding-top: 2px;
  box-sizing: border-box;
  background: #f5f5f5;
  height: 440px;
}
.sb-btn {
  width: 14px;
  height: 14px;
  box-sizing: border-box;
  border: 1px solid #ababab;
  background: #fff;
  display: flex;
  align-items: center;
  justify-content: center;
}
.sb-btn .dd { margin: 0; }
.tri-up { border-left: 3px solid transparent; border-right: 3px solid transparent; border-bottom: 4px solid #777; }
.thumb { width: 14px; height: 143px; box-sizing: border-box; border: 1px solid #ababab; background: #fff; margin: 1px 0 auto; }
.watermark {
  position: absolute;
  left: 991px;
  top: 414px;
  color: rgba(120, 120, 120, .5);
  font-family: "Open Sans", sans-serif;
  pointer-events: none;
}
.wm-big { font-size: 19.200px; line-height: 24px; }
.wm-small { font-size: 14.400px; line-height: 22px; }

/* sheet tabs */
.tabbar {
  height: 27px;
  box-sizing: border-box;
  display: flex;
  align-items: center;
  background: #f3f3f3;
  border-top: 1px solid #c6c6c6;
  font-size: 12px;
}
.nav { width: 100px; display: flex; gap: 24px; padding-left: 25px; box-sizing: border-box; align-items: center; }
.tri-left, .tri-right { width: 0; height: 0; border-top: 4px solid transparent; border-bottom: 4px solid transparent; }
.tri-left { border-right: 4px solid #bdbdbd; }
.tri-right { border-left: 4px solid #bdbdbd; }
.tab-sep { display: block; width: 1px; height: 20px; background: #bdbdbd; }
.stab {
  height: 22px;
  line-height: 22px;
  text-align: center;
  box-sizing: border-box;
  letter-spacing: .1px;
}
.instr { width: 92px; margin-left: 2px; background: #f00; color: #fff; }
.plan { width: 104px; margin-left: 4px; background: #c4d79b; color: #333; }
.budget {
  width: 68px;
  height: 27px;
  margin: -1px 0 0 2px;
  line-height: 25px;
  background: linear-gradient(#fff, #fafac0);
  border: 1px solid #c6c6c6;
  border-top: 0;
  border-bottom: 2px solid #217346;
  color: #217346;
  font-weight: 700;
}
.review { width: 131px; padding-left: 5px; letter-spacing: .2px; }
.plus { margin-left: 33px; }
.hscroll { margin-left: 172px; width: 532px; display: flex; align-items: center; height: 22px; background: #eaeaea; }
.sb-btn.h { width: 14px; height: 15px; }
.sb-btn.h i { border-left-color: #777; border-right-color: #777; }
.hthumb { width: 16px; height: 15px; box-sizing: border-box; border: 1px solid #ababab; background: #fff; margin-left: 1px; }
.h-track { flex: 1; }

/* status bar */
.status {
  height: 24px;
  background: #217346;
  color: #fff;
  display: flex;
  align-items: center;
  font-size: 11px;
  padding-left: 7px;
  box-sizing: border-box;
}
.views { display: flex; margin-left: 944px; height: 24px; }
.view { width: 38px; display: flex; align-items: center; justify-content: center; }
.view.active { background: #0a5c33; }
.zoom { display: flex; align-items: center; margin-left: 6px; }
.z-m { width: 5px; height: 2px; background: #fff; }
.z-p { width: 9px; height: 9px; background: linear-gradient(#fff, #fff) center/9px 2px no-repeat, linear-gradient(#fff, #fff) center/2px 9px no-repeat; }
.slider { width: 100px; height: 1px; background: #fff; margin: 0 4px; position: relative; }
.knob { position: absolute; left: 47px; top: -5px; width: 4px; height: 11px; background: #fff; }
.pct-txt { margin-left: 16px; }
</style>
